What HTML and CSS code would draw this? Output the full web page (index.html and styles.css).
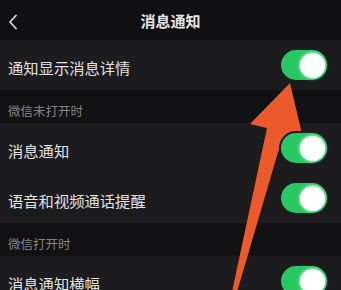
FILE: index.html
```html
<!DOCTYPE html>
<html>
<head>
<meta charset="utf-8">
<link rel="stylesheet" href="styles.css">
</head>
<body>
<div class="screen">
  <div class="header">
    <svg class="back" width="10" height="16" viewBox="0 0 10 16"><path d="M8 1.5 L2 8 L8 14.5" fill="none" stroke="#d8d8d8" stroke-width="1.8" stroke-linecap="round" stroke-linejoin="round"/></svg>
    <div class="title">消息通知</div>
  </div>
  <div class="row"><span class="label">通知显示消息详情</span><span class="toggle"><span class="knob"></span></span></div>
  <div class="section">微信未打开时</div>
  <div class="row"><span class="label">消息通知</span><span class="toggle"><span class="knob"></span></span></div>
  <div class="row"><span class="label">语音和视频通话提醒</span><span class="toggle"><span class="knob"></span></span></div>
  <div class="section">微信打开时</div>
  <div class="row"><span class="label">消息通知横幅</span><span class="toggle"><span class="knob"></span></span></div>
  <svg class="arrow" width="341" height="290" viewBox="0 0 341 290"><polygon points="290,83 302,134 281,142 237,292 232,292 267,128 250,124" fill="#ec5a2c"/></svg>
</div>
</body>
</html>
```
FILE: styles.css
```css
html, body { margin: 0; padding: 0; background: #111012; }
body { font-family: "Noto Sans CJK SC", "Noto Sans", sans-serif; }
.screen { position: relative; width: 341px; height: 290px; overflow: hidden; background: #111012; }
.header { height: 40px; display: flex; align-items: center; justify-content: center; position: relative; background: #100f11; }
.back { position: absolute; left: 8px; top: 14px; }
.title { color: #e6e6e6; font-size: 15px; font-weight: 700; line-height: 20px; margin-top: 1px; }
.row { height: 50px; background: #1c1b1e; display: flex; align-items: center; justify-content: space-between; padding: 0 14px 0 8px; }
.label { color: #e2e2e2; font-size: 15.3px; line-height: 20px; margin-top: 3px; }
.section { height: 33px; box-sizing: border-box; padding: 12px 0 0 8px; color: #858585; font-size: 12.5px; line-height: 18px; background: #111012; }
.toggle { position: relative; z-index: 2; width: 46px; height: 30px; border-radius: 15px; background: #27c862; display: flex; align-items: center; justify-content: flex-end; padding-right: 2px; box-sizing: border-box; box-shadow: 0 0 0 2px #1c1b1e; }
.knob { width: 25px; height: 25px; border-radius: 50%; background: #fff; box-shadow: 0 0 3px 1px rgba(200,255,220,0.7); }
.arrow { position: absolute; left: 0; top: 0; z-index: 1; }
```
